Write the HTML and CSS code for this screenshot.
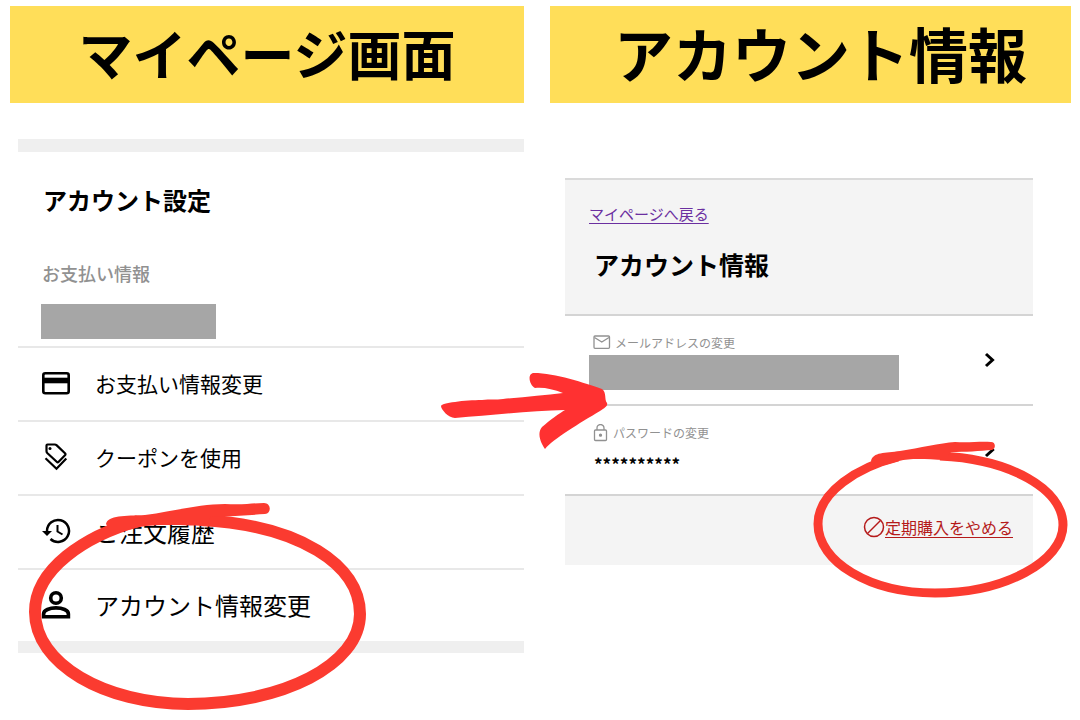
FILE: index.html
```html
<!DOCTYPE html>
<html lang="ja">
<head>
    <meta charset="UTF-8">
    <meta name="viewport" content="width=device-width, initial-scale=1.0">
    <title>マイページ画面</title>
    <link rel="stylesheet" href="styles.css">
</head>
<body>

<main class="guide">
    <section class="column">
        <h1 class="banner">マイページ画面</h1>

        <div class="mypage">
            <div class="mypage-head">
                <h2>アカウント設定</h2>
                <h3>お支払い情報</h3>
                <div class="masked masked-card"></div>
            </div>
            <nav class="menu">
                <a class="menu-item" href="#">
                    <svg class="menu-icon" viewBox="0 0 30 30" fill="none" stroke="#000">
                        <rect x="2.300" y="5.300" width="25.400" height="20" rx="2" stroke-width="2.600"/>
                        <path d="M2 12.500h26" stroke-width="5.600"/>
                    </svg>
                    お支払い情報変更
                </a>
                <a class="menu-item" href="#">
                    <svg class="menu-icon" viewBox="0 0 30 30" fill="none" stroke="#000" stroke-width="2.200">
                        <path d="M5.500 3.500q0-1 1-1h7.300q1 0 1.700.6l8.500 8.200q1 1 0 2l-6.300 6.500q-1 1-2 0l-9.200-8.600q-1-1-1-2z"/>
                        <path d="M4.500 16.200l11 10.600 9.800-10.200"/>
                        <circle cx="9" cy="6.500" r="1.500" fill="#000" stroke="none"/>
                    </svg>
                    クーポンを使用
                </a>
                <a class="menu-item wide" href="#">
                    <svg class="menu-icon" viewBox="0 0 30 30" fill="none" stroke="#000" stroke-width="2.500">
                        <path d="M6 15A11 11 0 1 1 9.500 23"/>
                        <path d="M16.500 9v6.500l5 3" stroke-width="2"/>
                        <path d="M1 15h10l-5 5z" fill="#000" stroke="none"/>
                    </svg>
                    ご注文履歴
                </a>
                <a class="menu-item wide" href="#">
                    <svg class="menu-icon" viewBox="0 0 30 30" fill="none" stroke="#000" stroke-width="3.600">
                        <circle cx="15" cy="8" r="5.300"/>
                        <path d="M2.600 26.800v-2.900c0-3.700 6-6 12.400-6s12.400 2.300 12.400 6v2.900z"/>
                    </svg>
                    アカウント情報変更
                </a>
            </nav>
        </div>

        <svg class="mark mark-account" viewBox="20 495 355 220">
            <path class="ring" stroke-width="12" d="M138 521C85 536 35 569 35 612C35 664 105 704 188 704C282 704 360 665 360 614C360 565 300 525 200 520"/>
            <path class="crown" d="M106 524C108 515 125 516 145 515C175 511 200 504 225 504C245 505 253 503 264 503C271 503 272 513 265 514C250 515 230 517 211 516L206 526C175 525 155 524 140 527L112 534Z"/>
        </svg>
    </section>

    <section class="column">
        <h1 class="banner banner-large">アカウント情報</h1>

        <div class="account">
            <div class="account-head">
                <a class="back" href="#">マイページへ戻る</a>
                <h2>アカウント情報</h2>
            </div>
            <a class="account-row" href="#">
                <div class="row-body">
                    <span class="row-label">
                        <svg width="18" height="16" viewBox="0 0 18 16" fill="none" stroke="#919191" stroke-width="1.300">
                            <rect x="1" y="1" width="15.500" height="12.300" rx="1"/>
                            <path d="M1.500 2.500l7.300 4.500L16 2.500"/>
                        </svg>
                        メールアドレスの変更
                    </span>
                    <span class="masked masked-mail"></span>
                </div>
                <svg class="chevron" viewBox="0 0 12 16"><path d="M2 2l6.500 6L2 14"/></svg>
            </a>
            <a class="account-row" href="#">
                <div class="row-body">
                    <span class="row-label">
                        <svg width="16" height="18" viewBox="0 0 16 18" fill="none" stroke="#919191" stroke-width="1.300">
                            <rect x="1.500" y="6" width="12" height="10.500" rx="1"/>
                            <path d="M4 6V4a3.500 3.500 0 0 1 7 0v2"/>
                            <circle cx="7.500" cy="11.200" r="1" fill="#919191"/>
                        </svg>
                        パスワードの変更
                    </span>
                    <span class="password">**********</span>
                </div>
                <svg class="chevron" viewBox="0 0 12 16"><path d="M2 2l6.500 6L2 14"/></svg>
            </a>
            <div class="account-foot">
                <svg width="22" height="22" viewBox="0 0 22 22" fill="none" stroke="#b51a1a" stroke-width="1.500">
                    <circle cx="11" cy="11" r="9.500"/>
                    <path d="M4.500 17.500l13-13"/>
                </svg>
                <a class="cancel" href="#">定期購入をやめる</a>
            </div>
        </div>

        <svg class="mark mark-arrow" viewBox="435 365 180 90">
            <path fill="#ff3131" d="M441 406C441 403 465 400 482 400C490 399 496 400 503 399C525 397 545 395 563 393C553 389 543 387 535 388C529 385 527 373 534 373C555 373 585 383 602 389C607 393 604 399 607 403C608 406 605 408 600 411C580 423 553 439 545 449C542 445 536 434 542 427C550 420 560 413 565 410C530 411 490 415 455 418C448 418 441 409 441 406Z"/>
        </svg>
        <svg class="mark mark-cancel" viewBox="805 435 270 170">
            <path class="ring" stroke-width="9" d="M898 457C858 467 818 492 818 524C818 562 870 593 935 593C1005 593 1063 561 1063 525C1063 489 1010 459 940 456"/>
            <path class="crown" d="M871 461C873 452 885 453 900 451C920 448 940 443 955 442C970 443 980 441 991 442C996 442 996 449 992 450C980 451 965 452 951 452L945 460C925 459 910 458 899 461L874 468Z"/>
        </svg>
    </section>
</main>

</body>
</html>
```

FILE: styles.css
```css
* {
    box-sizing: border-box;
}
body {
    margin: 0;
    background: #fff;
    color: #000;
    font-family: "Noto Sans CJK JP", sans-serif;
}
a {
    color: inherit;
    text-decoration: none;
}
h1, h2, h3 {
    margin: 0;
}
svg {
    display: block;
    flex-shrink: 0;
}
.guide {
    display: grid;
    grid-template-columns: 514fr 521fr;
    gap: 26px;
    min-height: 100vh;
    padding: 6px 9px 6px 10px;
}
.column {
    position: relative;
    min-width: 0;
}
.banner {
    display: flex;
    align-items: center;
    justify-content: center;
    height: 97px;
    padding-bottom: 4px;
    background: #ffde59;
    font-size: 54px;
    font-weight: 700;
    line-height: 1;
    white-space: nowrap;
}
.banner-large {
    padding-left: 20px;
    font-size: 59px;
}
.masked {
    display: block;
    height: 35px;
    background: #a6a6a6;
}

/* my page */
.mypage {
    margin: 36px 0 0 8px;
    border-top: 13px solid #efefef;
    border-bottom: 12px solid #efefef;
}
.mypage-head {
    padding: 30px 23px 7px;
}
.mypage-head h2 {
    padding-left: 2px;
    font-size: 24px;
    line-height: 36px;
}
.mypage-head h3 {
    margin: 42px 0 18px;
    padding-left: 1px;
    color: #919191;
    font-size: 18px;
    font-weight: 500;
    line-height: 26px;
}
.masked-card {
    width: 175px;
}
.menu-item {
    display: flex;
    align-items: center;
    gap: 24px;
    min-height: 74px;
    padding: 0 23px 2px;
    border-top: 2px solid #e8e8e8;
    font-size: 21px;
    white-space: nowrap;
}
.menu-item:last-child {
    min-height: 73px;
}
.menu-item.wide {
    font-size: 24px;
}
.menu-icon {
    width: 30px;
    height: 30px;
}

/* account details */
.account {
    margin: 75px 38px 0 15px;
    border-top: 2px solid #dadada;
}
.account-head {
    min-height: 134px;
    padding: 22px 24px;
    background: #f4f4f4;
}
.back {
    display: block;
    width: max-content;
    color: #6b2fa0;
    font-size: 15px;
    line-height: 24px;
    text-decoration: underline;
    text-underline-offset: 3px;
}
.account-head h2 {
    margin-top: 20px;
    padding-left: 5px;
    font-size: 25px;
    line-height: 36px;
}
.account-row {
    display: flex;
    align-items: center;
    justify-content: space-between;
    min-height: 90px;
    padding: 0 37px 0 24px;
    border-top: 2px solid #d4d4d4;
}
.row-body {
    display: flex;
    flex-direction: column;
    flex: 0 1 310px;
}
.row-label {
    display: flex;
    align-items: center;
    gap: 4px;
    padding-left: 4px;
    color: #919191;
    font-size: 12px;
    line-height: 24px;
}
.password {
    padding: 4px 0 0 5px;
    font-size: 17px;
    font-weight: 700;
    line-height: 30px;
}
.chevron {
    width: 12px;
    height: 16px;
    fill: none;
    stroke: #000;
    stroke-width: 3;
}
.account-foot {
    display: flex;
    align-items: center;
    justify-content: flex-end;
    min-height: 71px;
    padding: 0 20px 8px;
    border-top: 2px solid #d4d4d4;
    background: #f4f4f4;
}
.cancel {
    color: #b51a1a;
    font-size: 16px;
    text-decoration: underline;
    text-underline-offset: 3px;
}

/* hand-drawn marks */
.mark {
    position: absolute;
    pointer-events: none;
}
.ring {
    fill: none;
    stroke: #fb3b30;
}
.crown {
    fill: #fb3b30;
}
.mark-account {
    left: 10px;
    top: 489px;
    width: 355px;
}
.mark-arrow {
    left: -115px;
    top: 359px;
    width: 180px;
}
.mark-cancel {
    right: -4px;
    top: 429px;
    width: 270px;
}
```
